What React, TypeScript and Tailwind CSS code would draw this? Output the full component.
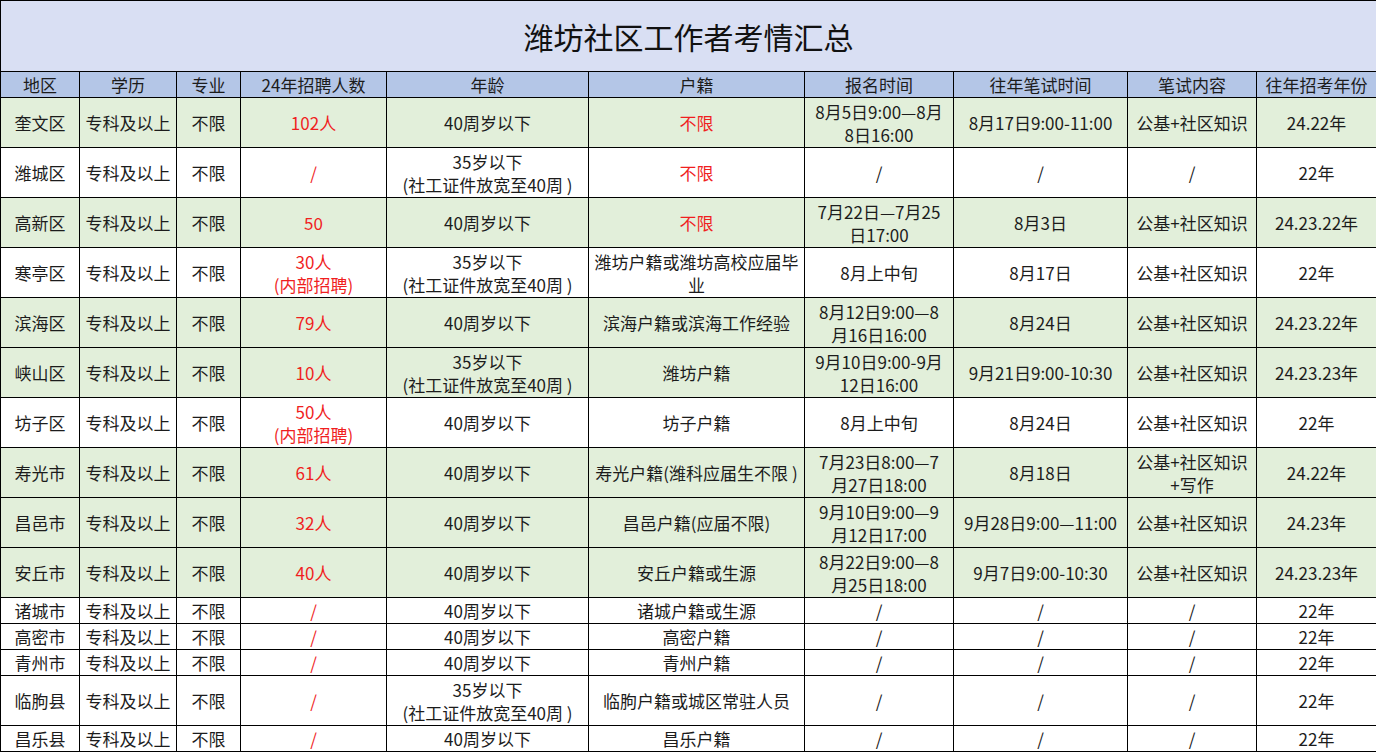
import React from "react";

type Cell = string | string[];

type Row = {
  area: string;
  num: Cell;
  age: Cell;
  huji: Cell;
  hujiRed?: boolean;
  signup: Cell;
  exam: string;
  content: Cell;
  years: string;
  green?: boolean;
  short?: boolean;
};

const AGE35 = ["35岁以下", "(社工证件放宽至40周 )"];
const AGE40 = "40周岁以下";
const GJ = "公基+社区知识";

const rows: Row[] = [
  { area: "奎文区", num: "102人", age: AGE40, huji: "不限", hujiRed: true, signup: ["8月5日9:00—8月", "8日16:00"], exam: "8月17日9:00-11:00", content: GJ, years: "24.22年", green: true },
  { area: "潍城区", num: "/", age: AGE35, huji: "不限", hujiRed: true, signup: "/", exam: "/", content: "/", years: "22年" },
  { area: "高新区", num: "50", age: AGE40, huji: "不限", hujiRed: true, signup: ["7月22日—7月25", "日17:00"], exam: "8月3日", content: GJ, years: "24.23.22年", green: true },
  { area: "寒亭区", num: ["30人", "(内部招聘)"], age: AGE35, huji: ["潍坊户籍或潍坊高校应届毕", "业"], signup: "8月上中旬", exam: "8月17日", content: GJ, years: "22年" },
  { area: "滨海区", num: "79人", age: AGE40, huji: "滨海户籍或滨海工作经验", signup: ["8月12日9:00—8", "月16日16:00"], exam: "8月24日", content: GJ, years: "24.23.22年", green: true },
  { area: "峡山区", num: "10人", age: AGE35, huji: "潍坊户籍", signup: ["9月10日9:00-9月", "12日16:00"], exam: "9月21日9:00-10:30", content: GJ, years: "24.23.23年", green: true },
  { area: "坊子区", num: ["50人", "(内部招聘)"], age: AGE40, huji: "坊子户籍", signup: "8月上中旬", exam: "8月24日", content: GJ, years: "22年" },
  { area: "寿光市", num: "61人", age: AGE40, huji: "寿光户籍(潍科应届生不限 )", signup: ["7月23日8:00—7", "月27日18:00"], exam: "8月18日", content: [GJ, "+写作"], years: "24.22年", green: true },
  { area: "昌邑市", num: "32人", age: AGE40, huji: "昌邑户籍(应届不限)", signup: ["9月10日9:00—9", "月12日17:00"], exam: "9月28日9:00—11:00", content: GJ, years: "24.23年", green: true },
  { area: "安丘市", num: "40人", age: AGE40, huji: "安丘户籍或生源", signup: ["8月22日9:00—8", "月25日18:00"], exam: "9月7日9:00-10:30", content: GJ, years: "24.23.23年", green: true },
  { area: "诸城市", num: "/", age: AGE40, huji: "诸城户籍或生源", signup: "/", exam: "/", content: "/", years: "22年", short: true },
  { area: "高密市", num: "/", age: AGE40, huji: "高密户籍", signup: "/", exam: "/", content: "/", years: "22年", short: true },
  { area: "青州市", num: "/", age: AGE40, huji: "青州户籍", signup: "/", exam: "/", content: "/", years: "22年", short: true },
  { area: "临朐县", num: "/", age: AGE35, huji: "临朐户籍或城区常驻人员", signup: "/", exam: "/", content: "/", years: "22年" },
  { area: "昌乐县", num: "/", age: AGE40, huji: "昌乐户籍", signup: "/", exam: "/", content: "/", years: "22年", short: true },
];

const widths = [79, 97, 64, 146, 202, 216, 149, 174, 129, 120];
const heads = ["地区", "学历", "专业", "24年招聘人数", "年龄", "户籍", "报名时间", "往年笔试时间", "笔试内容", "往年招考年份"];

function Lines({ v }: { v: Cell }) {
  if (typeof v === "string") return <>{v}</>;
  return (
    <>
      {v.map((l, i) => (
        <div key={i}>{l}</div>
      ))}
    </>
  );
}

function Td({ v, red }: { v: Cell; red?: boolean }) {
  return (
    <td className={`border border-black p-0 text-center align-middle whitespace-nowrap ${red ? "text-[#f01f1f]" : ""}`}>
      <Lines v={v} />
    </td>
  );
}

export default function App() {
  return (
    <div className="w-[1376px] h-[752px] overflow-hidden bg-white">
      <table
        className="table-fixed border-collapse w-[1376px] text-[17px] leading-[23px] text-[#1c1c1c]"
        style={{ fontFamily: '"Noto Sans CJK SC", "Noto Sans", sans-serif' }}
      >
        <colgroup>
          {widths.map((w, i) => (
            <col key={i} style={{ width: w }} />
          ))}
        </colgroup>
        <tbody>
          <tr className="h-[71px] bg-[#d9dff3]">
            <td colSpan={10} className="border border-black text-center align-middle text-[30px] text-[#111]">
              潍坊社区工作者考情汇总
            </td>
          </tr>
          <tr className="h-[26px] bg-[#b4c6e7]">
            {heads.map((h) => (
              <td key={h} className="border border-black p-0 text-center align-middle whitespace-nowrap leading-[24px]">
                {h}
              </td>
            ))}
          </tr>
          {rows.map((r) => (
            <tr
              key={r.area}
              className={`${r.short ? "h-[26px] leading-[24px]" : "h-[50px]"} ${r.green ? "bg-[#e2efda]" : "bg-white"}`}
            >
              <Td v={r.area} />
              <Td v="专科及以上" />
              <Td v="不限" />
              <Td v={r.num} red />
              <Td v={r.age} />
              <Td v={r.huji} red={r.hujiRed} />
              <Td v={r.signup} />
              <Td v={r.exam} />
              <Td v={r.content} />
              <Td v={r.years} />
            </tr>
          ))}
        </tbody>
      </table>
    </div>
  );
}
